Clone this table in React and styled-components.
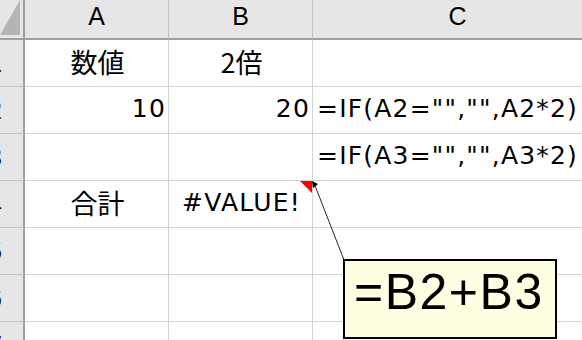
import styled, { createGlobalStyle } from "styled-components";

const GlobalStyle = createGlobalStyle`
  html, body {
    margin: 0;
    padding: 0;
    background: #fff;
    overflow: hidden;
  }
`;

const cols = ["A", "B", "C"];

const rows = [
  { n: 1, cells: [{ v: "数値", align: "center", cjk: true }, { v: "2倍", align: "center", cjk: true }, { v: "" }] },
  { n: 2, cells: [{ v: "10", align: "right" }, { v: "20", align: "right" }, { v: '=IF(A2="","",A2*2)' }] },
  { n: 3, cells: [{ v: "" }, { v: "" }, { v: '=IF(A3="","",A3*2)' }] },
  { n: 4, cells: [{ v: "合計", align: "center", cjk: true }, { v: "#VALUE!", align: "center", note: true }, { v: "" }] },
  { n: 5, cells: [{ v: "" }, { v: "" }, { v: "" }] },
  { n: 6, cells: [{ v: "" }, { v: "" }, { v: "" }] },
  { n: 7, cells: [{ v: "" }, { v: "" }, { v: "" }] },
];

const App = () => {
  return (
    <>
      <GlobalStyle />
      <Sheet>
        <Corner />
        {cols.map((c) => (
          <ColHead key={c}>{c}</ColHead>
        ))}
        {rows.map((r) => (
          <Row key={r.n} r={r} />
        ))}
        <Leader width="582" height="340">
          <line x1="314" y1="183" x2="344" y2="260" stroke="#222" strokeWidth="1" />
          <polygon points="312,181 318,184 313,188" fill="#000" />
        </Leader>
        <Callout>=B2+B3</Callout>
      </Sheet>
    </>
  );
};

const Row = ({ r }) => (
  <>
    <RowHead>
      <span>{r.n}</span>
    </RowHead>
    {r.cells.map((c, i) => (
      <Cell key={i} $align={c.align} $cjk={c.cjk}>
        {c.v}
        {c.note && <NoteMark />}
      </Cell>
    ))}
  </>
);

export default App;

const Sheet = styled.div`
  position: relative;
  width: 582px;
  height: 340px;
  overflow: hidden;
  display: grid;
  grid-template-columns: 25px 144px 144px 290px;
  grid-template-rows: 40px;
  grid-auto-rows: 47px;
  font-family: "DejaVu Sans", "Noto Sans CJK JP", sans-serif;
  color: #000;
`;

const Corner = styled.div`
  position: relative;
  background: #e6e6e6;
  border-right: 2px solid #9e9e9e;
  border-bottom: 2px solid #9e9e9e;
  box-sizing: border-box;

  &::after {
    content: "";
    position: absolute;
    left: 0;
    bottom: 3px;
    width: 20px;
    height: 35px;
    background: #b4b4b4;
    clip-path: polygon(100% 0, 100% 100%, 0 100%);
  }
`;

const ColHead = styled.div`
  display: flex;
  align-items: center;
  justify-content: center;
  background: #e6e6e6;
  border-right: 1px solid #c3c3c3;
  border-bottom: 2px solid #9e9e9e;
  box-sizing: border-box;
  font-family: "Liberation Sans", Arial, sans-serif;
  font-size: 25px;
  padding-bottom: 6px;
`;

const RowHead = styled.div`
  display: flex;
  align-items: center;
  justify-content: flex-end;
  overflow: hidden;
  background: #e6e6e6;
  border-right: 2px solid #9e9e9e;
  border-bottom: 1px solid #c3c3c3;
  box-sizing: border-box;
  padding-right: 21px;
  font-family: "Liberation Sans", Arial, sans-serif;
  font-size: 25px;

  & span {
    flex: none;
  }
`;

const Cell = styled.div`
  position: relative;
  display: flex;
  align-items: center;
  justify-content: ${({ $align }) =>
    $align === "center" ? "center" : $align === "right" ? "flex-end" : "flex-start"};
  padding: 0 2px 4px 4px;
  border-right: 1px solid #d4d4d4;
  border-bottom: 1px solid #d4d4d4;
  box-sizing: border-box;
  font-family: ${({ $cjk }) =>
    $cjk ? '"Noto Sans CJK JP", sans-serif' : '"DejaVu Sans", "Noto Sans CJK JP", sans-serif'};
  font-size: ${({ $cjk }) => ($cjk ? "27px" : "25px")};
  letter-spacing: ${({ $cjk }) => ($cjk ? "0" : "1.2px")};
  white-space: nowrap;
`;

const NoteMark = styled.i`
  position: absolute;
  top: 0;
  right: 0;
  width: 0;
  height: 0;
  border-top: 12px solid #ff0000;
  border-left: 12px solid transparent;
`;

const Leader = styled.svg`
  position: absolute;
  left: 0;
  top: 0;
  pointer-events: none;
`;

const Callout = styled.div`
  position: absolute;
  left: 343px;
  top: 259px;
  width: 214px;
  height: 80px;
  box-sizing: border-box;
  display: flex;
  align-items: flex-start;
  padding: 2px 0 0 9px;
  background: #ffffe1;
  border: 2px solid #000;
  font-family: "Liberation Sans", Arial, sans-serif;
  font-size: 50px;
  letter-spacing: 1.5px;
  color: #000;
`;
